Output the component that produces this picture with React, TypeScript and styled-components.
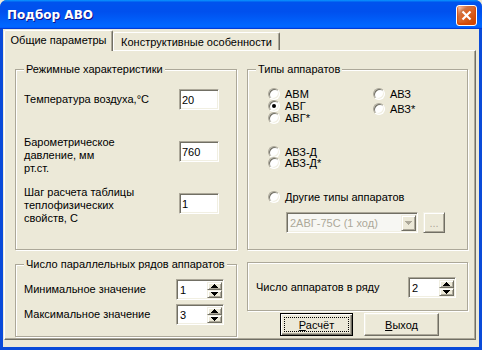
import styled, { createGlobalStyle } from 'styled-components'

const GlobalStyle = createGlobalStyle`
  html, body {
    margin: 0;
    padding: 0;
    background: #ece9d8;
  }
  body {
    font-family: 'Liberation Sans', Arial, sans-serif;
    font-size: 11px;
    color: #000;
  }
`

const Window = styled.div`
  width: 482px;
  height: 350px;
  display: flex;
  flex-direction: column;
  background: #0a4bd9;
  border-radius: 7px 7px 0 0;
  overflow: hidden;
`

const TitleBar = styled.div`
  height: 29px;
  flex: none;
  display: flex;
  align-items: center;
  justify-content: space-between;
  padding: 0 5px 0 7px;
  background: linear-gradient(
    180deg,
    #0997ff,
    #0053ee 8%,
    #0050ee 40%,
    #06f 88%,
    #06f 93%,
    #005bff 95%,
    #003dd7 96%,
    #003dd7
  );
`

const TitleText = styled.span`
  color: #fff;
  font-family: 'DejaVu Sans', 'Liberation Sans', sans-serif;
  font-weight: bold;
  font-size: 12px;
  text-shadow: 1px 1px #0f1089;
  margin-top: 1px;
`

const CloseButton = styled.div`
  width: 21px;
  height: 21px;
  box-sizing: border-box;
  margin-top: 2px;
  border: 1px solid #fff;
  border-radius: 3px;
  background: radial-gradient(
    circle at 90% 90%,
    #cc4600 0%,
    #dc6527 55%,
    #cd7546 70%,
    #ffccb2 90%,
    #fff 100%
  );
  box-shadow: inset 0 -1px 2px 1px #da4600;
  display: flex;
  align-items: center;
  justify-content: center;
`

const Client = styled.div`
  flex: 1;
  margin: 0 3px 3px 3px;
  background: #ece9d8;
  display: flex;
  flex-direction: column;
`

const TabControl = styled.div`
  height: 310px;
  margin: 1px 3px 0 1px;
  display: flex;
  flex-direction: column;
`

const TabStrip = styled.div`
  height: 20px;
  display: flex;
  align-items: flex-end;
`

const Tab = styled.div<{ $active?: boolean; $w: number }>`
  width: ${(p) => p.$w}px;
  height: ${(p) => (p.$active ? 21 : 18)}px;
  margin-bottom: ${(p) => (p.$active ? -1 : 0)}px;
  position: relative;
  z-index: ${(p) => (p.$active ? 1 : 0)};
  box-sizing: border-box;
  background: #ece9d8;
  border: 1px solid;
  border-bottom: none;
  border-color: #fff #716f64 transparent #fff;
  box-shadow: inset -1px 0 0 #aca899;
  border-radius: 2px 2px 0 0;
  display: flex;
  align-items: center;
  justify-content: center;
  padding-bottom: ${(p) => (p.$active ? 2 : 0)}px;
  white-space: nowrap;
`

const Panel = styled.div`
  flex: 1;
  border: 1px solid;
  border-color: #fff #716f64 #716f64 #fff;
  box-shadow: inset -1px -1px 0 #aca899;
`

const Content = styled.div`
  display: grid;
  grid-template-columns: 222px 221px;
  grid-template-rows: 187px 79px;
  column-gap: 10px;
  row-gap: 8px;
  padding: 12px 0 0 10px;
`

const Group = styled.fieldset<{ $pad: string; $h?: number }>`
  margin: 0;
  min-width: 0;
  box-sizing: border-box;
  ${(p) => (p.$h ? `height: ${p.$h}px;` : '')}
  padding: ${(p) => p.$pad};
  border: 1px solid #aca899;
  box-shadow: inset 1px 1px 0 #fff, 1px 1px 0 #fff;
`

const Legend = styled.legend`
  padding: 0 2px;
  line-height: 13px;
  white-space: nowrap;
  background: #ece9d8;
`

const FieldRow = styled.div<{ $mt: number; $center?: boolean }>`
  margin-top: ${(p) => p.$mt}px;
  display: flex;
  justify-content: space-between;
  align-items: ${(p) => (p.$center ? 'center' : 'flex-start')};
`

const FieldLabel = styled.div`
  line-height: 13px;
  white-space: nowrap;
`

const sunken = `
  border: 1px solid;
  border-color: #aca899 #fff #fff #aca899;
  box-shadow: inset 1px 1px 0 #716f64, inset -1px -1px 0 #f1efe2;
`

const raised = `
  border: 1px solid;
  border-color: #f1efe2 #716f64 #716f64 #f1efe2;
  box-shadow: inset 1px 1px 0 #fff, inset -1px -1px 0 #aca899;
`

const TextBox = styled.input<{ $mt?: number }>`
  width: 40px;
  height: 21px;
  margin: ${(p) => p.$mt ?? 0}px 0 0 0;
  box-sizing: border-box;
  padding: 0 2px;
  font: inherit;
  color: #000;
  background: #fff;
  outline: none;
  ${sunken}
`

const SpinBox = styled.div`
  width: 48px;
  height: 21px;
  box-sizing: border-box;
  display: flex;
  background: #fff;
  padding: 2px 1px 1px 2px;
  ${sunken}
`

const SpinText = styled.div`
  flex: 1;
  line-height: 16px;
  padding-left: 1px;
`

const SpinButtons = styled.div`
  width: 15px;
  display: flex;
  flex-direction: column;
`

const ArrowButton = styled.div`
  flex: 1;
  box-sizing: border-box;
  background: #ece9d8;
  display: flex;
  align-items: center;
  justify-content: center;
  ${raised}
`

const RadioArea = styled.div`
  margin-left: 12px;
  display: flex;
  flex-direction: column;
`

const RadioColumns = styled.div`
  margin-top: 12px;
  display: grid;
  grid-template-columns: 105px auto;
`

const RadioCol = styled.div`
  display: flex;
  flex-direction: column;
`

const RadioItem = styled.div<{ $mt?: number }>`
  height: 12px;
  margin-top: ${(p) => p.$mt ?? 0}px;
  display: flex;
  align-items: center;
  gap: 5px;
  line-height: 12px;
  white-space: nowrap;
`

const RadioCircle = styled.span<{ $checked?: boolean }>`
  width: 12px;
  height: 12px;
  flex: none;
  box-sizing: border-box;
  border-radius: 50%;
  background: #fff;
  border: 1px solid;
  border-color: #aca899 #fff #fff #aca899;
  box-shadow: inset 1px 1px 0 #716f64, inset -1px -1px 0 #f1efe2;
  display: flex;
  align-items: center;
  justify-content: center;

  &::after {
    content: '';
    width: 4px;
    height: 4px;
    border-radius: 50%;
    background: #000;
    display: ${(p) => (p.$checked ? 'block' : 'none')};
  }
`

const ComboRow = styled.div`
  margin: 9px 0 0 18px;
  display: flex;
  gap: 5px;
`

const Combo = styled.div`
  width: 132px;
  height: 21px;
  box-sizing: border-box;
  display: flex;
  padding: 2px 1px 1px 2px;
  background: #f7f7f3;
  ${sunken}
`

const ComboText = styled.div`
  flex: 1;
  color: #aca899;
  line-height: 16px;
  padding-left: 1px;
  white-space: nowrap;
`

const ComboArrow = styled(ArrowButton)`
  flex: none;
  width: 15px;
`

const BrowseButton = styled.div`
  width: 22px;
  height: 21px;
  box-sizing: border-box;
  background: #ece9d8;
  color: #aca899;
  display: flex;
  align-items: center;
  justify-content: center;
  ${raised}
`

const RightColumn = styled.div`
  display: flex;
  flex-direction: column;
`

const CountGroupWrap = styled.div`
  margin-top: 4px;
`

const ButtonRow = styled.div`
  margin: 2px 0 0 33px;
  display: flex;
  gap: 11px;
`

const PushButton = styled.div<{ $default?: boolean; $w: number }>`
  width: ${(p) => p.$w}px;
  height: 23px;
  box-sizing: border-box;
  background: #ece9d8;
  display: flex;
  padding: 3px;
  ${(p) =>
    p.$default
      ? `
    border: 1px solid #000;
    box-shadow: inset 1px 1px 0 #fff, inset -1px -1px 0 #716f64, inset -2px -2px 0 #aca899;
  `
      : `
    border: 1px solid;
    border-color: #fff #716f64 #716f64 #fff;
    box-shadow: inset -1px -1px 0 #aca899, inset 1px 1px 0 #f1efe2;
  `}
`

const ButtonFace = styled.div<{ $focus?: boolean }>`
  flex: 1;
  display: flex;
  align-items: center;
  justify-content: center;
  border: 1px dotted ${(p) => (p.$focus ? '#000' : 'transparent')};
`

const Arrow = ({ up, color = '#000' }: { up?: boolean; color?: string }) => (
  <svg width="7" height="4" viewBox="0 0 7 4" shapeRendering="crispEdges">
    <path
      d={
        up
          ? 'M3 0h1v1h1v1h1v1h1v1H0v-1h1v-1h1v-1h1z'
          : 'M0 0h7v1h-1v1h-1v1h-1v1h-1v-1h-1v-1h-1v-1h-1z'
      }
      fill={color}
    />
  </svg>
)

const Spin = ({ value }: { value: string }) => (
  <SpinBox>
    <SpinText>{value}</SpinText>
    <SpinButtons>
      <ArrowButton>
        <Arrow up />
      </ArrowButton>
      <ArrowButton>
        <Arrow />
      </ArrowButton>
    </SpinButtons>
  </SpinBox>
)

const Radio = ({ label, checked, mt }: { label: string; checked?: boolean; mt?: number }) => (
  <RadioItem $mt={mt}>
    <RadioCircle $checked={checked} />
    {label}
  </RadioItem>
)

export default function App() {
  return (
    <>
      <GlobalStyle />
      <Window>
        <TitleBar>
          <TitleText>Подбор АВО</TitleText>
          <CloseButton>
            <svg width="11" height="11" viewBox="0 0 11 11">
              <path d="M1.5 1.5L9.5 9.5M9.5 1.5L1.5 9.5" stroke="#fff" strokeWidth="2.2" />
            </svg>
          </CloseButton>
        </TitleBar>
        <Client>
          <TabControl>
            <TabStrip>
              <Tab $active $w={109}>Общие параметры</Tab>
              <Tab $w={167}>Конструктивные особенности</Tab>
            </TabStrip>
            <Panel>
              <Content>
                <Group $pad="0 17px 0 8px">
                  <Legend>Режимные характеристики</Legend>
                  <FieldRow $mt={13} $center>
                    <FieldLabel>Температура воздуха,°С</FieldLabel>
                    <TextBox defaultValue="20" readOnly />
                  </FieldRow>
                  <FieldRow $mt={26}>
                    <FieldLabel>
                      Барометрическое
                      <br />
                      давление, мм
                      <br />
                      рт.ст.
                    </FieldLabel>
                    <TextBox $mt={5} defaultValue="760" readOnly />
                  </FieldRow>
                  <FieldRow $mt={11}>
                    <FieldLabel>
                      Шаг расчета таблицы
                      <br />
                      теплофизических
                      <br />
                      свойств, С
                    </FieldLabel>
                    <TextBox $mt={7} defaultValue="1" readOnly />
                  </FieldRow>
                </Group>

                <Group $pad="0 0 0 8px">
                  <Legend>Типы аппаратов</Legend>
                  <RadioArea>
                    <RadioColumns>
                      <RadioCol>
                        <Radio label="АВМ" />
                        <Radio label="АВГ" checked />
                        <Radio label="АВГ*" />
                      </RadioCol>
                      <RadioCol>
                        <Radio label="АВЗ" />
                        <Radio label="АВЗ*" mt={3} />
                      </RadioCol>
                    </RadioColumns>
                    <Radio label="АВЗ-Д" mt={22} />
                    <Radio label="АВЗ-Д*" mt={-1} />
                    <Radio label="Другие типы аппаратов" mt={22} />
                    <ComboRow>
                      <Combo>
                        <ComboText>2АВГ-75С (1 ход)</ComboText>
                        <ComboArrow>
                          <Arrow color="#aca899" />
                        </ComboArrow>
                      </Combo>
                      <BrowseButton>...</BrowseButton>
                    </ComboRow>
                  </RadioArea>
                </Group>

                <Group $pad="0 12px 0 8px">
                  <Legend>Число параллельных рядов аппаратов</Legend>
                  <FieldRow $mt={8} $center>
                    <FieldLabel>Минимальное значение</FieldLabel>
                    <Spin value="1" />
                  </FieldRow>
                  <FieldRow $mt={4} $center>
                    <FieldLabel>Максимальное значение</FieldLabel>
                    <Spin value="3" />
                  </FieldRow>
                </Group>

                <RightColumn>
                  <CountGroupWrap>
                    <Group $pad="14px 11px 0 8px" $h={49}>
                      <FieldRow $mt={0} $center>
                        <FieldLabel>Число аппаратов в ряду</FieldLabel>
                        <Spin value="2" />
                      </FieldRow>
                    </Group>
                  </CountGroupWrap>
                  <ButtonRow>
                    <PushButton $default $w={73}>
                      <ButtonFace $focus>
                        <span>
                          <u>Р</u>асчёт
                        </span>
                      </ButtonFace>
                    </PushButton>
                    <PushButton $w={75}>
                      <ButtonFace>
                        <span>
                          <u>В</u>ыход
                        </span>
                      </ButtonFace>
                    </PushButton>
                  </ButtonRow>
                </RightColumn>
              </Content>
            </Panel>
          </TabControl>
        </Client>
      </Window>
    </>
  )
}
